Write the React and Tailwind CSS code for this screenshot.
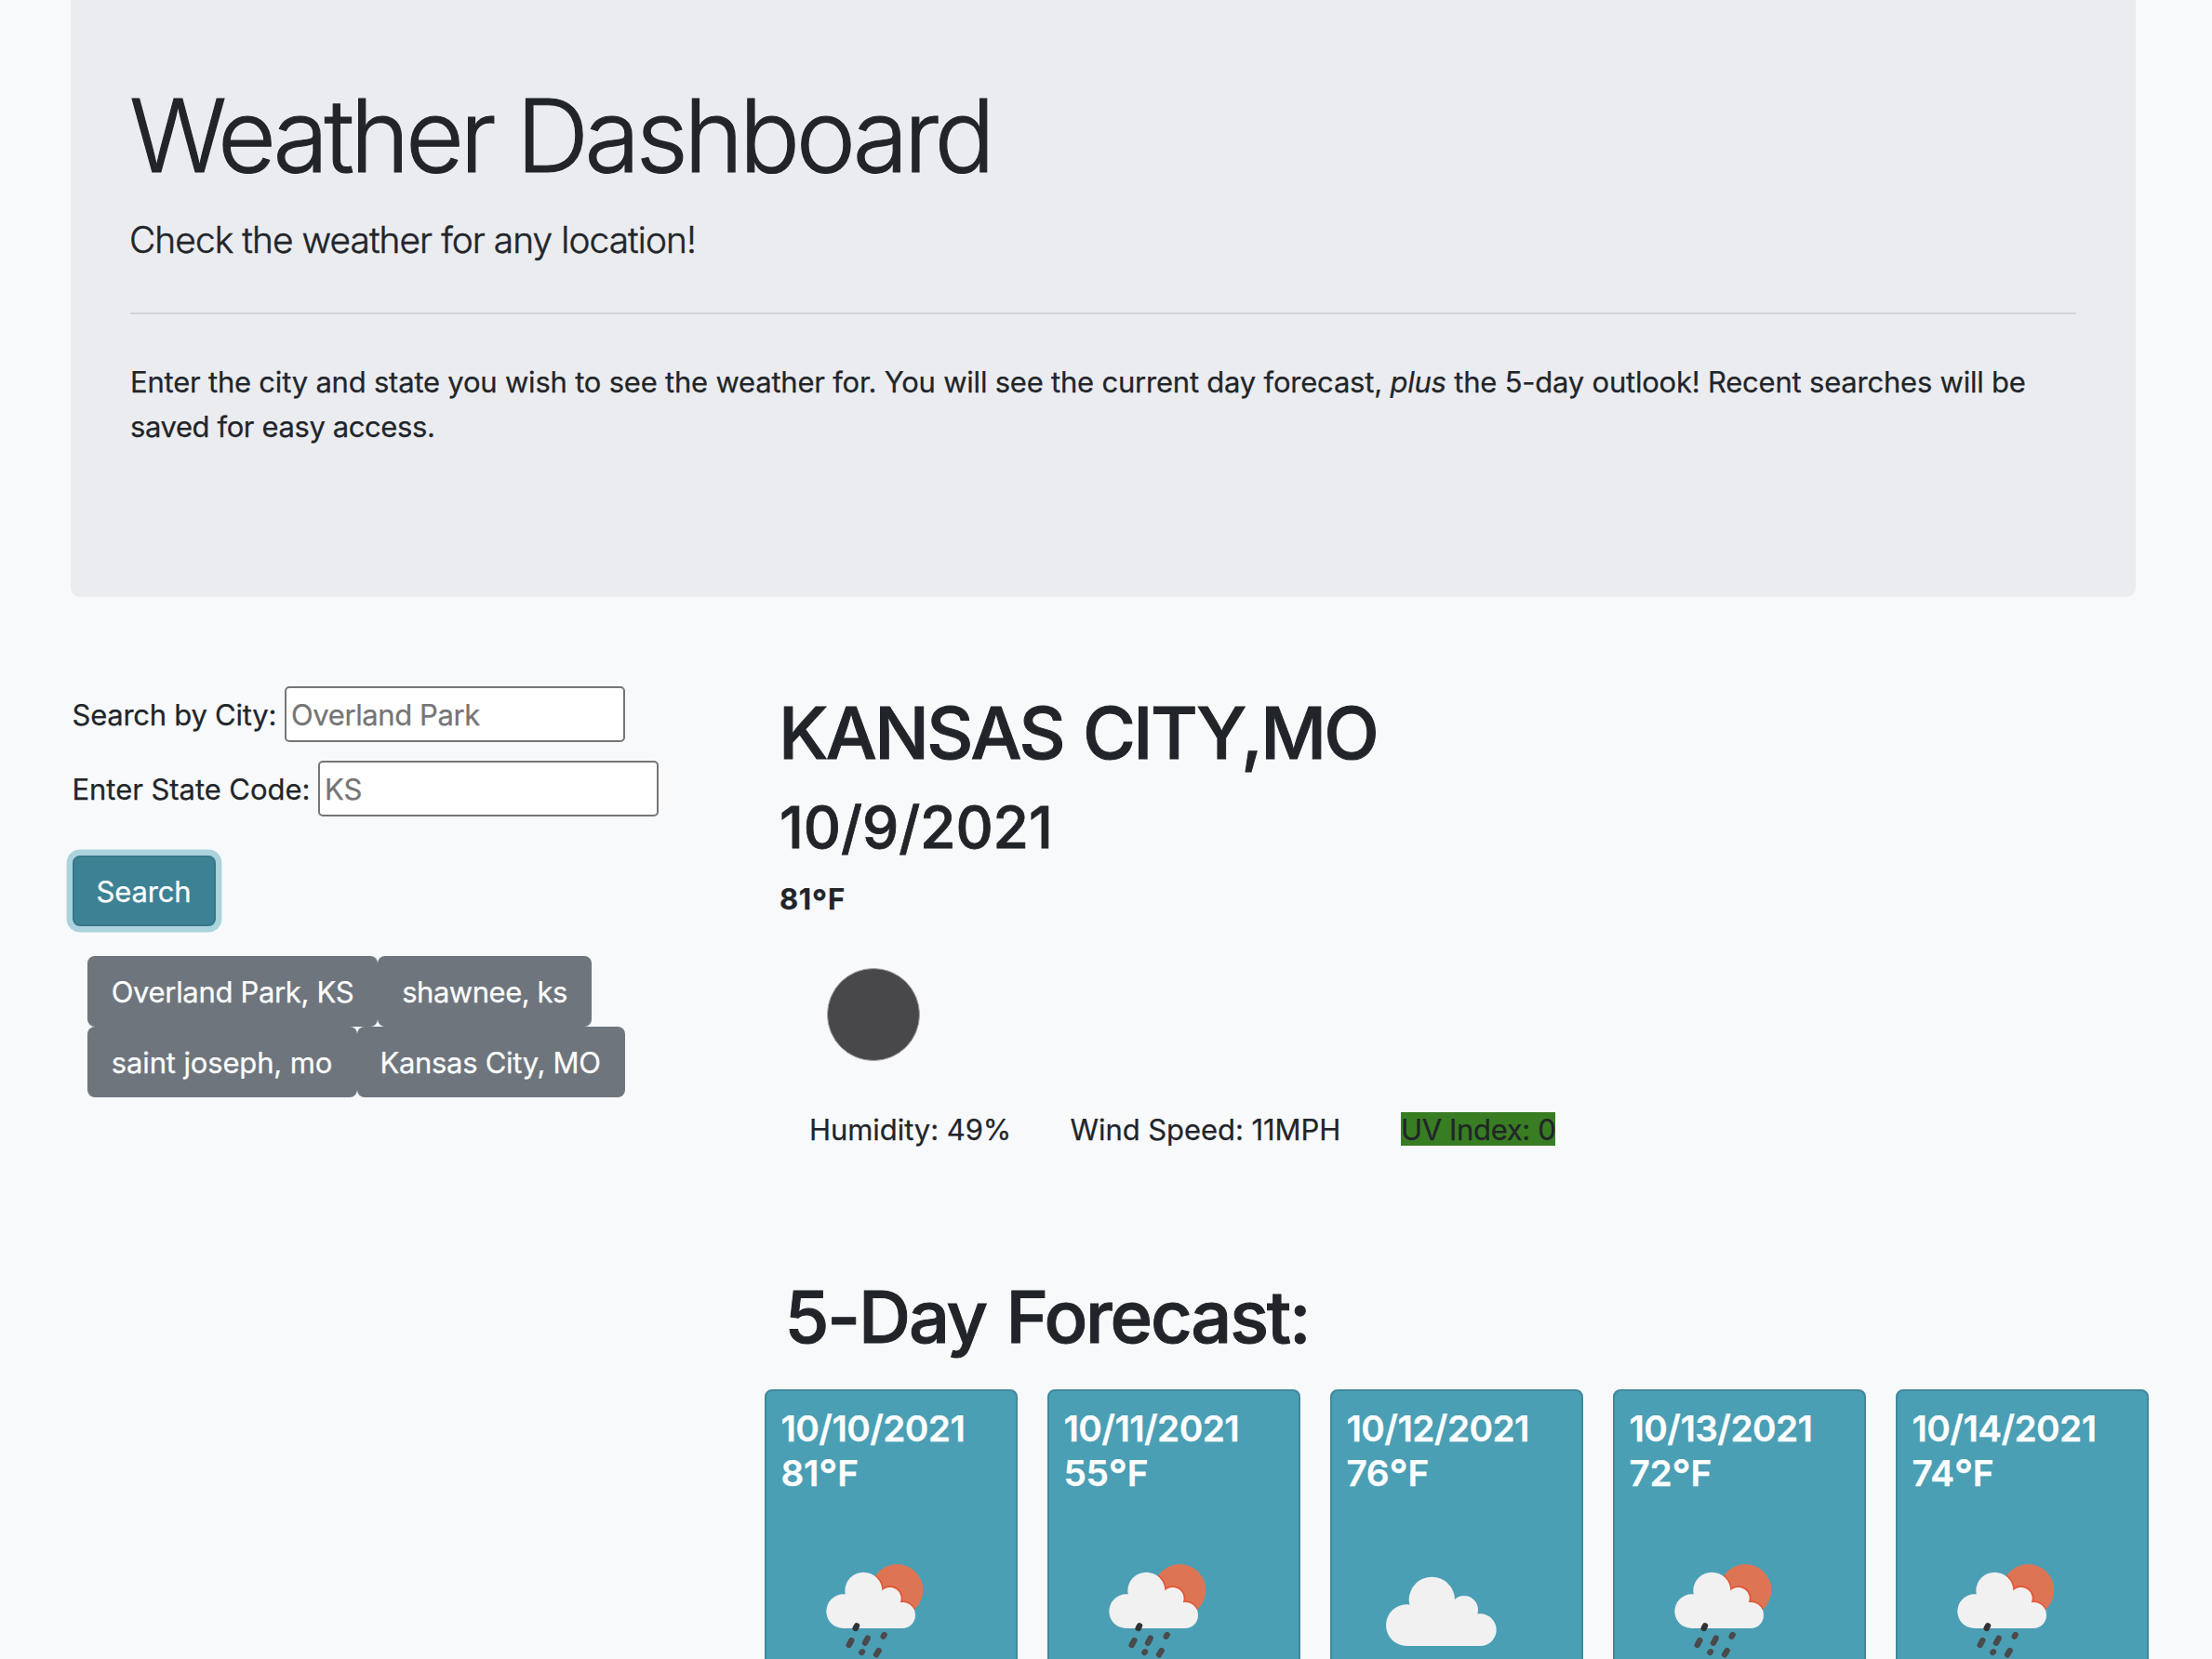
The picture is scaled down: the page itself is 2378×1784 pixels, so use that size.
import React from "react";

const CLOUD = "#f1f1f2";

function RainIcon() {
  const drops = [
    [179, 333, 183, 325, "#333335"],
    [158, 387, 166, 372, "#4a4a4c"],
    [210, 380, 218, 365, "#4a4a4c"],
    [269, 359, 272, 354, "#4a4a4c"],
    [199, 411, 201, 409, "#4a4a4c"],
    [246, 418, 254, 405, "#4a4a4c"],
  ];
  return (
    <svg viewBox="0 0 600 432" className="block h-[144px] w-[200px]">
      <defs>
        <clipPath id="sun">
          <circle cx="313" cy="210" r="84" />
        </clipPath>
      </defs>
      <circle cx="313" cy="210" r="84" fill="#dd7555" />
      <g clipPath="url(#sun)" fill="none" stroke="#e05a3a" strokeWidth="8">
        <circle cx="205" cy="212" r="61" />
        <circle cx="290" cy="237" r="38" />
        <circle cx="330" cy="291" r="43" />
      </g>
      <g fill={CLOUD}>
        <circle cx="140" cy="278" r="55" />
        <circle cx="205" cy="212" r="60" />
        <circle cx="290" cy="237" r="36" />
        <circle cx="330" cy="291" r="42" />
        <path d="M140 333V250l65-40 85 20 40 30v73z" />
      </g>
      {drops.map(([x1, y1, x2, y2, c], i) => (
        <line key={i} x1={x1} y1={y1} x2={x2} y2={y2} stroke={c} strokeWidth="19" strokeLinecap="round" />
      ))}
    </svg>
  );
}

function CloudIcon() {
  return (
    <svg viewBox="0 0 600 432" className="block h-[144px] w-[200px]" fill={CLOUD}>
      <circle cx="133" cy="323" r="67" />
      <circle cx="214" cy="241" r="74" />
      <circle cx="318" cy="273" r="45" />
      <circle cx="370" cy="338" r="52" />
      <path d="M133 390V290l81-50 104 30 52 30v90z" />
    </svg>
  );
}

function Temp({ value }) {
  return (
    <>
      {value}
      <span className="relative top-[0.1em] text-[1.16em] leading-[0]">°</span>F
    </>
  );
}

const days = [
  { date: "10/10/2021", temp: 81, Icon: RainIcon },
  { date: "10/11/2021", temp: 55, Icon: RainIcon },
  { date: "10/12/2021", temp: 76, Icon: CloudIcon },
  { date: "10/13/2021", temp: 72, Icon: RainIcon },
  { date: "10/14/2021", temp: 74, Icon: RainIcon },
];

const field =
  "h-[60px] w-[366px] rounded-[5px] border-2 border-[#767676] bg-white pl-[5px] text-[31px] placeholder:text-[#757575] placeholder:opacity-100";
const history =
  "flex h-[76px] items-center justify-center whitespace-nowrap rounded-lg bg-[#6e757d] pt-0.5 text-[31px] text-white";

export default function App() {
  return (
    <div className="h-[1784px] w-[2378px] overflow-hidden bg-[#f8f9fb] font-['Inter',sans-serif] text-[31px] leading-[48px] text-[#212529] [-webkit-text-stroke:0.25px]">
      <header className="ml-[76px] h-[642px] w-[2220px] rounded-b-[10px] bg-[#ebecf0] px-16 pt-[79px]">
        <h1 className="-ml-px h-[134px] whitespace-nowrap text-[108.6px] leading-[134px] font-light tracking-[-4.49px] [-webkit-text-stroke:1.1px]">
          Weather Dashboard
        </h1>
        <p className="mt-[14.5px] -ml-px text-[38.8px] leading-[60px] font-light tracking-[-0.9px] [-webkit-text-stroke:0.5px]">
          Check the weather for any location!
        </p>
        <hr className="mt-[48.5px] h-0.5 w-[2092px] border-0 bg-[#d2d4d8]" />
        <p className="mt-12 whitespace-nowrap pt-[0.7px] tracking-[-0.215px]">
          Enter the city and state you wish to see the weather for. You will see the current day forecast, <em>plus</em> the
          5-day outlook! Recent searches will be
          <br />
          <span className="tracking-[-0.4px]">saved for easy access.</span>
        </p>
      </header>

      <main className="flex pt-24">
        <section className="ml-[77.5px] w-[760.5px] shrink-0">
          <div className="flex items-center">
            <label className="w-[228.5px] shrink-0 whitespace-nowrap pt-0.5 tracking-[-0.25px]">Search by City:</label>
            <input className={`${field} tracking-[-0.4px]`} placeholder="Overland Park" />
          </div>
          <div className="mt-5 flex items-center">
            <label className="w-[264.5px] shrink-0 whitespace-nowrap pt-0.5 tracking-[-0.05px]">Enter State Code:</label>
            <input className={field} placeholder="KS" />
          </div>
          <button className="mt-[42px] ml-[0.5px] flex h-[76px] w-[154px] items-center justify-center rounded-lg border-2 border-[#367687] bg-[#3d8294] pt-px pr-px tracking-[-0.15px] text-white shadow-[0_0_0_6.4px_#aad3de]">
            Search
          </button>
          <div className="mt-8 ml-[16.5px]">
            <div className="flex">
              <button className={`${history} w-[312px] tracking-[-0.33px]`}>Overland Park, KS</button>
              <button className={`${history} w-[230px] tracking-[-0.48px]`}>shawnee, ks</button>
            </div>
            <div className="flex">
              <button className={`${history} w-[290px] pr-px tracking-[-0.15px]`}>saint joseph, mo</button>
              <button className={`${history} w-[288px] pr-0.5 tracking-[-0.3px]`}>Kansas City, MO</button>
            </div>
          </div>
        </section>

        <section className="w-[1540px] shrink-0 whitespace-nowrap pt-[1.8px]">
          <h2 className="-ml-px text-[77.6px] leading-[96px] font-medium tracking-[-2.6px] [-webkit-text-stroke:1px] [word-spacing:3px]">
            KANSAS CITY,MO
          </h2>
          <h3 className="mt-[15.4px] text-[62.4px] leading-[78px] font-medium tracking-[-0.1px] [-webkit-text-stroke:0.8px]">
            10/9/2021
          </h3>
          <p className="mt-[14px] font-bold tracking-[0.6px]">
            <Temp value={81} />
          </p>
          <div className="mt-[50px] ml-[51px] size-[100px] rounded-full border border-[#a5a5a7] bg-[#48484a]" />
          <div className="mt-[49.5px] flex">
            <span className="ml-8 w-[280.5px] tracking-[-0.06px]">Humidity: 49%</span>
            <span className="w-[355.5px] tracking-[-0.065px]">Wind Speed: 11MPH</span>
            <span className="mt-[5px] h-9 w-[166px] bg-[#387d22] leading-[37px] tracking-[-0.36px]">UV Index: 0</span>
          </div>
          <h2 className="mt-[129px] ml-[5.5px] text-[77.6px] leading-[96px] font-medium tracking-[-2.15px] [-webkit-text-stroke:1px] [word-spacing:3px]">
            5-Day Forecast:
          </h2>
          <div className="mt-[30px] -ml-4 flex gap-8">
            {days.map(({ date, temp, Icon }) => (
              <article
                key={date}
                className="h-[400px] w-[272px] rounded-lg border-2 border-[#3f899b] bg-[#4b9fb5] px-4 pt-4 text-white"
              >
                <h5 className="-ml-[0.5px] h-24 text-[38.8px] leading-[48px] font-semibold tracking-[-0.6px]">
                  {date}
                  <br />
                  <span className="tracking-[-0.4px]">
                    <Temp value={temp} />
                  </span>
                </h5>
                <div className="mt-[32px] ml-5">
                  <Icon />
                </div>
              </article>
            ))}
          </div>
        </section>
      </main>
    </div>
  );
}
